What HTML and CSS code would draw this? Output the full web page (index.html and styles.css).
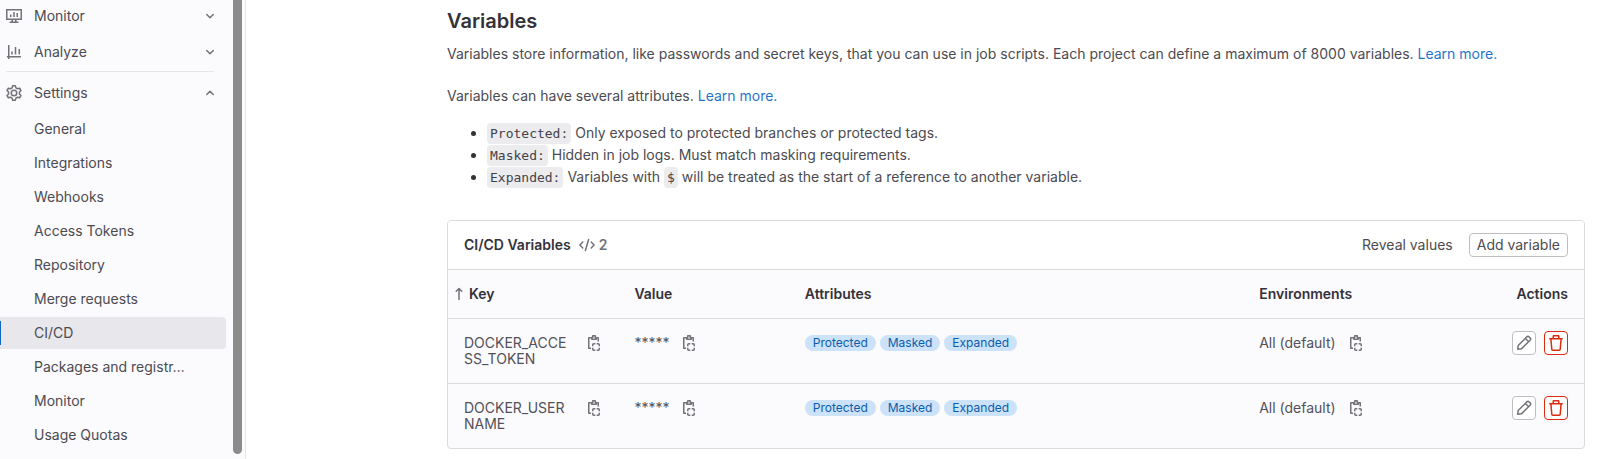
FILE: index.html
```html
<!DOCTYPE html>
<html lang="en">
<head>
<meta charset="utf-8">
<meta name="viewport" content="width=device-width, initial-scale=1">
<title>CI/CD Settings</title>
<link rel="stylesheet" href="styles.css">
</head>
<body>
<svg class="sprite" aria-hidden="true">
  <symbol id="i-monitor" viewBox="0 0 16 16"><path d="M.75 1.75h14.500v9.500H.75zM6.250 11.500v2.750M9.750 11.500v2.750M3.500 14.250h9M4.750 8.900V6.500M8 8.900V4M11.250 8.900V5"/></symbol>
  <symbol id="i-chart" viewBox="0 0 16 16"><path d="M2.750 1v14M.900 12.750h14.100M6 10.500V7.500M9.500 10.500V3M13.250 10.500V5"/></symbol>
  <symbol id="i-gear" viewBox="0 0 16 16"><path stroke-linejoin="round" d="M6.700 .750H9.300L9.900 2.800 11.550 3.750 13.630 3.250 14.930 5.500 13.450 7.050V8.950L14.930 10.500 13.630 12.750 11.550 12.250 9.900 13.200 9.300 15.250H6.700L6.100 13.200 4.450 12.250 2.370 12.750 1.070 10.500 2.550 8.950V7.050L1.070 5.500 2.370 3.250 4.450 3.750 6.100 2.800z"/><circle cx="8" cy="8" r="2.750"/></symbol>
  <symbol id="i-down" viewBox="0 0 16 16"><path stroke-linecap="round" stroke-linejoin="round" d="M4.750 6.500 8 9.750l3.250-3.250"/></symbol>
  <symbol id="i-up" viewBox="0 0 16 16"><path stroke-linecap="round" stroke-linejoin="round" d="M4.750 9.500 8 6.250l3.250 3.250"/></symbol>
  <symbol id="i-arrow" viewBox="0 0 16 16"><path stroke-linecap="round" stroke-linejoin="round" d="M8 13.500V2.750M5.250 5.250 8 2.500l2.750 2.750"/></symbol>
  <symbol id="i-code" viewBox="0 0 16 16"><path stroke-linecap="round" stroke-linejoin="round" d="M3.750 5 .9 8l2.850 3M12.250 5l2.850 3-2.850 3M9.600 2.500 6.400 13.500"/></symbol>
  <symbol id="i-copy" viewBox="0 0 16 16"><path stroke-linejoin="round" d="M5.250 2.750H2.750v10.500H5M10.750 2.750h1.500V6.500"/><path stroke-linejoin="round" d="M5.750 4.250V2.500h1V.750h2.500V2.500h1v1.750z"/><path d="M6.750 11.300V9.750a1 1 0 0 1 1-1H9.300M10.700 8.750h1.550a1 1 0 0 1 1 1V11.300M13.250 12.700v1.550a1 1 0 0 1-1 1H10.700M9.300 15.250H7.750a1 1 0 0 1-1-1V12.700"/></symbol>
  <symbol id="i-pencil" viewBox="0 0 16 16"><path stroke-linejoin="round" d="M1.750 14.250l.400-3.700 8.900-8.900a1.250 1.250 0 0 1 1.800 0l1.500 1.500a1.250 1.250 0 0 1 0 1.800l-8.900 8.900zM9.500 3.500l3 3"/></symbol>
  <symbol id="i-trash" viewBox="0 0 16 16"><path stroke-linejoin="round" d="M1.250 3.750h13.500M5.250 3.500V1.250a.5.5 0 0 1 .5-.5h4.500a.5.5 0 0 1 .5.500V3.500M2.900 4l.900 10.250a1 1 0 0 0 1 1h6.400a1 1 0 0 0 1-1L13.100 4"/></symbol>
</svg>
<div class="layout">
  <aside class="sidebar">
    <nav class="nav" aria-label="Project">
      <button class="section" type="button"><svg class="icon"><use href="#i-monitor"/></svg><span class="label">Monitor</span><svg class="icon"><use href="#i-down"/></svg></button>
      <button class="section" type="button"><svg class="icon"><use href="#i-chart"/></svg><span class="label">Analyze</span><svg class="icon"><use href="#i-down"/></svg></button>
      <hr class="divider">
      <button class="section" type="button" aria-expanded="true"><svg class="icon"><use href="#i-gear"/></svg><span class="label">Settings</span><svg class="icon"><use href="#i-up"/></svg></button>
      <ul class="subnav">
        <li><a class="item" href="#">General</a></li>
        <li><a class="item" href="#">Integrations</a></li>
        <li><a class="item" href="#">Webhooks</a></li>
        <li><a class="item" href="#">Access Tokens</a></li>
        <li><a class="item" href="#">Repository</a></li>
        <li><a class="item" href="#">Merge requests</a></li>
        <li><a class="item active" href="#" aria-current="page">CI/CD</a></li>
        <li><a class="item" href="#">Packages and registr…</a></li>
        <li><a class="item" href="#">Monitor</a></li>
        <li><a class="item" href="#">Usage Quotas</a></li>
      </ul>
    </nav>
    <div class="scroll-thumb"></div>
  </aside>
  <main class="main">
    <h1 class="title">Variables</h1>
    <p class="text">Variables store information, like passwords and secret keys, that you can use in job scripts. Each project can define a maximum of 8000 variables. <a class="link" href="#">Learn more.</a></p>
    <p class="text spaced">Variables can have several attributes. <a class="link" href="#">Learn more.</a></p>
    <ul class="attributes">
      <li><code>Protected:</code> Only exposed to protected branches or protected tags.</li>
      <li><code>Masked:</code> Hidden in job logs. Must match masking requirements.</li>
      <li><code>Expanded:</code> Variables with <code>$</code> will be treated as the start of a reference to another variable.</li>
    </ul>
    <section class="card">
      <header class="card-header">
        <h2 class="card-title">CI/CD Variables</h2>
        <span class="count"><svg class="icon"><use href="#i-code"/></svg>2</span>
        <div class="card-actions">
          <button class="btn plain" type="button">Reveal values</button>
          <button class="btn" type="button">Add variable</button>
        </div>
      </header>
      <table class="table">
        <colgroup><col class="col-key"><col class="col-value"><col class="col-attributes"><col class="col-env"><col class="col-actions"></colgroup>
        <thead>
          <tr><th class="sorted" scope="col" aria-sort="ascending"><div class="sort"><svg class="icon"><use href="#i-arrow"/></svg>Key</div></th><th scope="col">Value</th><th scope="col">Attributes</th><th scope="col">Environments</th><th class="end" scope="col">Actions</th></tr>
        </thead>
        <tbody>
          <tr>
            <td><div class="cell key"><span class="name">DOCKER_ACCESS_TOKEN</span><button class="copy" type="button" aria-label="Copy key"><svg class="icon"><use href="#i-copy"/></svg></button></div></td>
            <td><div class="cell"><span>*****</span><button class="copy" type="button" aria-label="Copy value"><svg class="icon"><use href="#i-copy"/></svg></button></div></td>
            <td><div class="badges"><span class="badge">Protected</span><span class="badge">Masked</span><span class="badge">Expanded</span></div></td>
            <td><div class="cell"><span>All (default)</span><button class="copy" type="button" aria-label="Copy environment"><svg class="icon"><use href="#i-copy"/></svg></button></div></td>
            <td><div class="row-actions"><button class="btn square" type="button" aria-label="Edit"><svg class="icon"><use href="#i-pencil"/></svg></button><button class="btn square danger" type="button" aria-label="Delete"><svg class="icon"><use href="#i-trash"/></svg></button></div></td>
          </tr>
          <tr>
            <td><div class="cell key"><span class="name">DOCKER_USERNAME</span><button class="copy" type="button" aria-label="Copy key"><svg class="icon"><use href="#i-copy"/></svg></button></div></td>
            <td><div class="cell"><span>*****</span><button class="copy" type="button" aria-label="Copy value"><svg class="icon"><use href="#i-copy"/></svg></button></div></td>
            <td><div class="badges"><span class="badge">Protected</span><span class="badge">Masked</span><span class="badge">Expanded</span></div></td>
            <td><div class="cell"><span>All (default)</span><button class="copy" type="button" aria-label="Copy environment"><svg class="icon"><use href="#i-copy"/></svg></button></div></td>
            <td><div class="row-actions"><button class="btn square" type="button" aria-label="Edit"><svg class="icon"><use href="#i-pencil"/></svg></button><button class="btn square danger" type="button" aria-label="Delete"><svg class="icon"><use href="#i-trash"/></svg></button></div></td>
          </tr>
        </tbody>
      </table>
    </section>
  </main>
</div>
</body>
</html>
```
FILE: styles.css
```css
* { box-sizing: border-box; }

body {
  margin: 0;
  background: #fff;
  color: #4c4b51;
  font: 14px/20px Inter, "Noto Sans", sans-serif;
}

button { font: inherit; color: inherit; cursor: pointer; }
.sprite { display: none; }

.icon {
  flex: none;
  display: block;
  width: 16px;
  height: 16px;
  fill: none;
  stroke: currentColor;
  stroke-width: 1.5;
  color: #737278;
}

.layout { display: flex; min-height: 100vh; }

/* Sidebar */
.sidebar {
  flex: none;
  display: flex;
  width: 246px;
  padding-right: 3px;
  background: #fbfafd;
  border-right: 1px solid #e6e6ea;
}
.nav { flex: 1; }
.section {
  display: flex;
  align-items: center;
  gap: 12px;
  width: 100%;
  height: 32px;
  margin-bottom: 4px;
  padding: 0 8px 0 6px;
  border: 0;
  background: none;
  text-align: left;
}
.label { flex: 1; }
.divider {
  height: 1px;
  margin: -1px 12px 5px 6px;
  border: 0;
  background: #e6e6ea;
}
.subnav {
  display: grid;
  gap: 2px;
  margin: 0;
  padding: 0;
  list-style: none;
}
.item {
  position: relative;
  display: block;
  padding: 6px 8px 6px 34px;
  border-radius: 0 4px 4px 0;
  color: inherit;
  text-decoration: none;
  white-space: nowrap;
}
.active { background: #e8e7eb; }
.active::before {
  content: "";
  position: absolute;
  inset: 4px auto 4px 0;
  width: 1px;
  background: #1068bf;
}
.scroll-thumb {
  flex: none;
  width: 9px;
  margin: 0 0 5px 7px;
  border-radius: 0 0 5px 5px;
  background: #8b8b8b;
}

/* Content */
.main { flex: 1; min-width: 0; padding: 8px 17px 10px 201px; }
.title {
  margin: 0;
  color: #333238;
  font-size: 20px;
  font-weight: 600;
  line-height: 26px;
}
.text { margin: 10px 0 0; }
.spaced { margin-top: 22px; }
.link { color: #1f75cb; text-decoration: none; }
.attributes {
  margin: 16px 0 32px;
  padding-left: 40px;
  line-height: 22px;
}
.attributes li::marker { color: #333238; }
code {
  padding: 3px;
  border-radius: 4px;
  background: #ececef;
  color: #434248;
  font: 13px/16px "DejaVu Sans Mono", monospace;
}

/* Variables card */
.card {
  overflow: hidden;
  border: 1px solid #dcdcde;
  border-radius: 4px;
  background: #fbfafd;
}
.card-header {
  display: flex;
  align-items: center;
  gap: 8px;
  padding: 12px 16px;
  background: #fff;
}
.card-title {
  margin: 0;
  color: #333238;
  font-size: 14px;
  font-weight: 600;
}
.count {
  display: flex;
  align-items: center;
  gap: 4px;
  color: #737278;
  font-weight: 600;
}
.card-actions { display: flex; gap: 8px; margin-left: auto; }
.btn {
  height: 24px;
  padding: 0 7px;
  border: 1px solid #bfbfc3;
  border-radius: 4px;
  background: #fff;
  line-height: 16px;
}
.plain { border-color: transparent; background: none; }
.square {
  display: grid;
  place-items: center;
  width: 24px;
  padding: 0;
}
.danger { border-color: #dd2b0e; }
.danger .icon { color: #dd2b0e; }

.table {
  width: 100%;
  border-collapse: separate;
  border-spacing: 0;
  table-layout: fixed;
  line-height: 16px;
}
.col-key, .col-value { width: 15%; }
.col-attributes { width: 40%; }
.col-env { width: 20%; }
.col-actions { width: 10%; }
.table th, .table td {
  padding: 16px;
  border-top: 1px solid #dcdcde;
  text-align: left;
  vertical-align: top;
}
.table th { color: #333238; font-weight: 600; }
.table .sorted { padding-left: 3px; }
.table .end { text-align: right; }
.sort { display: flex; gap: 2px; }
.cell { display: flex; align-items: flex-start; gap: 12px; color: #535158; }
.key { gap: 16px; }
.name { flex: 1; word-break: break-all; }
.copy { padding: 0; border: 0; background: none; }
.badges { display: flex; gap: 4px; }
.badge {
  padding: 0 8px;
  border-radius: 8px;
  background: #cbe2f9;
  color: #0b5cad;
  font-size: 12px;
}
.row-actions {
  display: flex;
  justify-content: flex-end;
  gap: 8px;
  margin: -4px 0;
}
```
